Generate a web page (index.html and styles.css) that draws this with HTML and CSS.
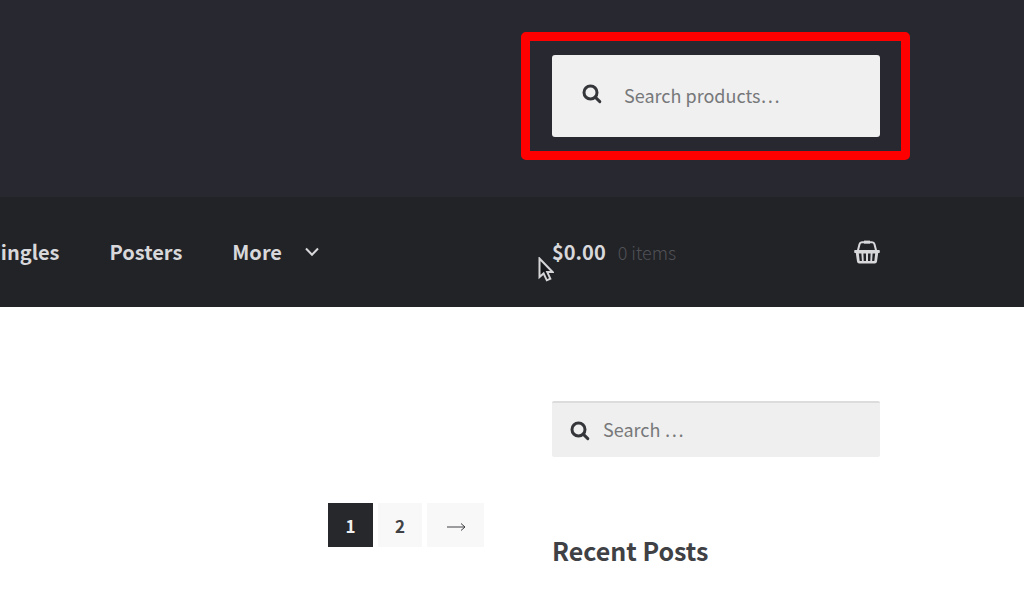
FILE: index.html
```html
<!DOCTYPE html>
<html lang="en">
<head>
<meta charset="utf-8">
<meta name="viewport" content="width=device-width, initial-scale=1">
<title>Shop</title>
<link rel="stylesheet" href="styles.css">
</head>
<body>
<header class="site-header">
  <div class="masthead columns">
    <form class="product-search rail" role="search">
      <label class="search-field search-field-large">
        <svg class="search-icon" viewBox="0 0 20 20" aria-hidden="true"><circle cx="8.5" cy="8.500" r="6.500"/><path d="M13.200 13.200 17.800 17.600"/></svg>
        <input type="search" placeholder="Search products…" aria-label="Search products">
      </label>
      <span class="highlight"></span>
    </form>
  </div>
  <div class="nav-bar columns">
    <nav class="main-nav" aria-label="Primary">
      <a href="#">ingles</a>
      <a href="#">Posters</a>
      <a class="more" href="#">More
        <svg class="chevron" viewBox="0 0 14 10" aria-hidden="true"><path d="M1 1.500 7 7.800 13 1.500"/></svg>
      </a>
    </nav>
    <a class="cart rail" href="#">
      <span class="amount">$0.00</span>
      <span class="count">0 items</span>
      <svg class="basket" viewBox="0 0 26 24" aria-hidden="true">
        <path class="handle" d="M3.800 11 5.500 4.200Q6 2.300 8 2.300H18Q20 2.300 20.500 4.200L22.200 11"/>
        <path class="solid" d="M10 .6h6v3h-6z"/>
        <path class="solid" fill-rule="evenodd" d="M1 10h24q.8 0 .8.8v1.400q0 .8-.8.8h-.8L23 21.500q-.3 2-2.200 2H5.200q-1.900 0-2.200-2L1.800 13H1q-.8 0-.8-.8v-1.400q0-.8.800-.8zM4.800 13.500l.9 7.500h2.200l-.5-7.500zM9.400 13.500l.3 7.500h2.300v-7.500zM14 13.500V21h2.300l.3-7.500zM18.600 13.500l-.5 7.500h2.200l.9-7.500z"/>
      </svg>
    </a>
    <svg class="pointer" viewBox="0 0 16 25" aria-hidden="true"><path d="M1.500 1.500V20L5.600 16.400 8.800 23.300 12.300 21.700 9.200 15H14.500Z"/></svg>
  </div>
</header>
<div class="content columns">
  <main class="listing">
    <nav class="pagination" aria-label="Pages">
      <span class="page current" aria-current="page">1</span>
      <a class="page" href="#">2</a>
      <a class="page next" href="#" aria-label="Next page"><svg class="arrow" viewBox="0 0 20 10" aria-hidden="true"><path d="M1 5H19M15 1.500 19 5 15 8.500"/></svg></a>
    </nav>
  </main>
  <aside class="sidebar rail">
    <form role="search">
      <label class="search-field">
        <svg class="search-icon" viewBox="0 0 20 20" aria-hidden="true"><circle cx="8.500" cy="8.500" r="6.500"/><path d="M13.200 13.200 17.800 17.600"/></svg>
        <input type="search" placeholder="Search …" aria-label="Search">
      </label>
    </form>
    <h2 class="widget-title">Recent Posts</h2>
  </aside>
</div>
</body>
</html>
```
FILE: styles.css
```css
* {
  box-sizing: border-box;
}

body {
  margin: 0;
  background: #fff;
  color: #404145;
  font-family: "Noto Sans CJK SC", "Noto Sans", sans-serif;
  font-size: 18px;
  line-height: 28px;
  overflow-x: hidden;
}

a {
  color: inherit;
  text-decoration: none;
}

svg {
  display: block;
  flex: none;
  fill: none;
  stroke: currentColor;
}

.columns {
  display: grid;
  grid-template-columns: minmax(0, 1fr) 328px;
  column-gap: 68px;
  padding-right: 144px;
}

.rail {
  grid-column: 2;
}

.site-header {
  background: #282930;
}

.masthead {
  padding-top: 55px;
  padding-bottom: 60px;
}

.product-search {
  position: relative;
}

.highlight {
  position: absolute;
  inset: -23px -30px -23px -31px;
  border: 9px solid #f00;
  border-radius: 5px;
  pointer-events: none;
}

.search-field {
  display: flex;
  align-items: center;
  gap: 13px;
  height: 56px;
  padding: 0 18px;
  background: #efefef;
  border-top: 2px solid #dcdcdc;
  border-radius: 2px;
  color: #35363a;
}

.search-field-large {
  gap: 22px;
  height: 82px;
  padding: 0 30px;
  background: #f0f0f1;
  border-top: 0;
  border-radius: 3px;
}

.search-icon {
  width: 20px;
  height: 20px;
  margin-top: 2px;
  stroke-width: 3;
  stroke-linecap: round;
}

.search-field-large .search-icon {
  margin-top: 0;
  margin-bottom: 4px;
}

.search-field input {
  flex: 1;
  min-width: 0;
  padding: 0 0 2px;
  border: 0;
  outline: 0;
  background: transparent;
  color: inherit;
  font: inherit;
}

.search-field input::placeholder {
  color: #77787a;
  opacity: 1;
}

.nav-bar {
  position: relative;
  align-items: center;
  height: 110px;
  background: #222327;
  color: #d8d8db;
}

.main-nav {
  display: flex;
  justify-content: flex-end;
  gap: 50px;
  padding-right: 165px;
  font-size: 20px;
  font-weight: 700;
}

.more {
  display: flex;
  align-items: center;
  gap: 23px;
}

.chevron {
  width: 14px;
  height: 10px;
  stroke-width: 2;
}

.cart {
  display: flex;
  align-items: center;
  gap: 12px;
}

.amount {
  font-size: 20px;
  font-weight: 700;
}

.count {
  color: #505156;
  font-weight: 300;
}

.basket {
  width: 26px;
  height: 24px;
  margin-left: auto;
}

.handle {
  stroke-width: 2;
}

.solid {
  fill: currentColor;
  stroke: none;
}

.pointer {
  position: absolute;
  top: 60px;
  left: 538px;
  width: 16px;
  height: 25px;
  fill: #17181b;
  stroke: #d5d5d8;
  stroke-width: 2;
}

.content {
  padding-top: 94px;
}

.pagination {
  display: flex;
  justify-content: flex-end;
  gap: 5px;
  padding-top: 102px;
}

.page {
  display: flex;
  align-items: center;
  justify-content: center;
  width: 44px;
  height: 44px;
  padding-top: 2px;
  background: #f8f8f8;
  font-size: 17px;
  font-weight: 700;
}

.current {
  width: 45px;
  background: #27282c;
  color: #f1f1f1;
}

.next {
  width: 57px;
  padding-top: 4px;
}

.arrow {
  width: 20px;
  height: 10px;
}

.widget-title {
  margin: 77px 0 0;
  font-size: 25px;
  line-height: 32px;
}
```
